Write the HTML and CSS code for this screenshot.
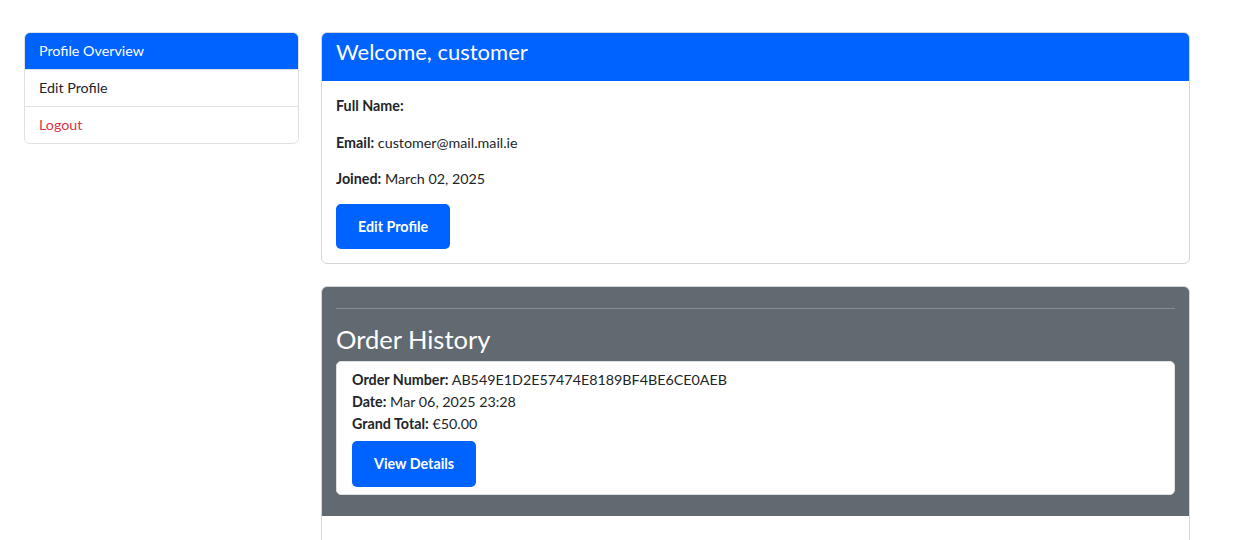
FILE: index.html
```html
<!DOCTYPE html>
<html lang="en">
<head>
<meta charset="utf-8">
<title>Profile</title>
<link rel="stylesheet" href="styles.css">
</head>
<body>
<div class="page">
  <aside class="sidebar">
    <nav class="list-group">
      <a class="list-item active" href="#">Profile Overview</a>
      <a class="list-item" href="#">Edit Profile</a>
      <a class="list-item danger" href="#">Logout</a>
    </nav>
  </aside>
  <main class="main">
    <section class="card">
      <div class="card-header blue">
        <h3 class="welcome">Welcome, customer</h3>
      </div>
      <div class="card-body">
        <p class="field"><strong>Full Name:</strong> </p>
        <p class="field"><strong>Email:</strong> customer@mail.mail.ie</p>
        <p class="field"><strong>Joined:</strong> March 02, 2025</p>
        <a class="btn" href="#">Edit Profile</a>
      </div>
    </section>
    <section class="card orders">
      <div class="orders-header">
        <hr class="rule">
        <h2 class="orders-title">Order History</h2>
        <div class="order">
          <div class="order-line"><strong>Order Number:</strong> AB549E1D2E57474E8189BF4BE6CE0AEB</div>
          <div class="order-line"><strong>Date:</strong> Mar 06, 2025 23:28</div>
          <div class="order-line"><strong>Grand Total:</strong> €50.00</div>
          <a class="btn btn-details" href="#">View Details</a>
        </div>
      </div>
      <div class="orders-rest"></div>
    </section>
  </main>
</div>
</body>
</html>
```
FILE: styles.css
```css
* { box-sizing: border-box; }
html, body {
  margin: 0;
  padding: 0;
  background: #fff;
  font-family: Lato, "Noto Sans", "Liberation Sans", sans-serif;
  font-size: 14.3px;
  line-height: 21px;
  color: #212529;
}
.page {
  display: flex;
  align-items: flex-start;
  gap: 22px;
  padding: 32px 0 0 24px;
}
.sidebar { width: 275px; flex: none; }
.list-group {
  display: flex;
  flex-direction: column;
  border: 1px solid #dee2e6;
  border-radius: 6px;
  overflow: hidden;
}
.list-item {
  display: block;
  padding: 8px 14px;
  color: #212529;
  text-decoration: none;
  border-top: 1px solid #dee2e6;
  line-height: 20px;
}
.list-item:first-child { border-top: none; }
.list-item.active {
  background: #0062ff;
  color: #fff;
  margin: -1px -1px 0;
  padding-left: 15px;
  padding-top: 9px;
}
.list-item.danger { color: #dc3545; }

.main {
  width: 869px;
  flex: none;
  display: flex;
  flex-direction: column;
  gap: 22px;
}
.card {
  border: 1px solid #d6d6d6;
  border-radius: 6px;
  overflow: hidden;
  background: #fff;
}
.card-header.blue {
  background: #0062ff;
  color: #fff;
  padding: 7px 14px 8px;
  margin: -1px -1px 0;
}
.welcome {
  margin: 0 0 8px;
  padding-left: 1px;
  font-size: 22px;
  line-height: 26px;
  font-weight: 400;
}
.card-body { padding: 14px 14px 14px; }
.field { margin: 0 0 15.5px; }
.field:last-of-type { margin-bottom: 14.5px; }
.field strong { font-weight: 700; }
.btn {
  display: inline-block;
  background: #0062ff;
  color: #fff;
  font-weight: 700;
  text-decoration: none;
  padding: 12px 22px;
  line-height: 21px;
  border-radius: 5px;
}
.orders-header {
  background: #616a71;
  margin: -1px -1px 0;
  padding: 22px 15px 21px;
}
.rule {
  border: none;
  border-top: 1px solid #858c92;
  margin: 0 0 14px;
}
.orders-title {
  margin: 0 0 6px;
  color: #fff;
  font-size: 25.5px;
  line-height: 32px;
  font-weight: 400;
}
.order {
  background: #fff;
  border-radius: 5px;
  border: 1px solid #e0e0e0;
  padding: 7px 15px 7px;
}
.order-line { line-height: 22px; }
.btn-details {
  margin-top: 6px;
  line-height: 22px;
  padding: 12px 22px;
}
.orders-rest { height: 40px; }
```
